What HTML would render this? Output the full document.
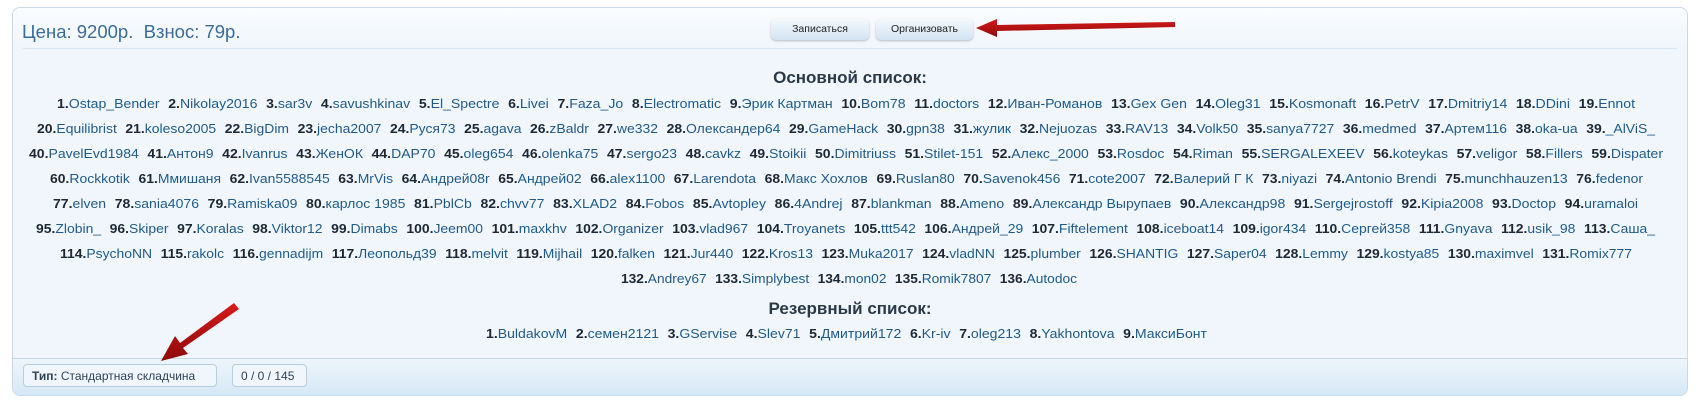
<!DOCTYPE html>
<html><head><meta charset="utf-8">
<style>
html,body{margin:0;padding:0;width:1705px;height:406px;background:#fff;overflow:hidden;font-family:"Liberation Sans","DejaVu Sans",sans-serif;}
#box{position:absolute;left:12px;top:7px;width:1674px;height:387px;border:1px solid #c9d9e8;border-radius:8px;background:#f0f6fc;overflow:hidden;}
#hdr{position:absolute;left:0;top:0;width:100%;height:40px;background:linear-gradient(#fafcfe,#f0f6fc);}
#sep{position:absolute;left:10px;right:10px;top:40px;height:1px;background:#d8e6f3;}
#price{position:absolute;left:9px;top:13px;font-size:18.5px;color:#3b6c9b;}
.btn{position:absolute;top:11px;height:21px;border-radius:5px;background:linear-gradient(#f4f9fd,#d3e4f2);box-shadow:0 1px 2px rgba(0,0,0,.25);font-size:10.5px;color:#222;text-align:center;line-height:21px;}
#foot{position:absolute;left:0;bottom:0;width:100%;height:36px;border-top:1px solid #c3d6e7;background:linear-gradient(#eef5fb,#d6e8f6);}
.tag{position:absolute;top:5px;height:23px;border:1px solid #b7cde0;border-radius:4px;background:#f0f6fc;font-size:12px;color:#2d4358;line-height:23px;box-sizing:border-box;padding:0 8px;}
.h{position:absolute;left:0;width:100%;text-align:center;font-weight:bold;font-size:17px;color:#2a3948;}
.ln{position:absolute;white-space:nowrap;font-size:13px;color:#1f5a8a;line-height:16px;}
.ln span{display:inline-block;transform-origin:0 0;}
.ln i{font-style:normal;font-weight:bold;color:#1c2834;}
.ln b{font-weight:normal;margin-right:8px;}
</style></head><body>
<div id="box">
 <div id="hdr"></div><div id="sep"></div>
 <div id="price">Цена: 9200р.&nbsp; Взнос: 79р.</div>
 <div class="btn" style="left:758px;width:98px;">Записаться</div>
 <div class="btn" style="left:863px;width:97px;">Организовать</div>
 <div class="h" style="top:60px;">Основной список:</div>
 <div class="h" style="top:291px;">Резервный список:</div>
 <div id="foot">
  <div class="tag" style="left:10px;width:194px;"><b>Тип:</b> Стандартная складчина</div>
  <div class="tag" style="left:219px;width:75px;">0 / 0 / 145</div>
 </div>
</div>

<div class="ln" id="l1"><span><i>1.</i><b>Ostap_Bender</b><i>2.</i><b>Nikolay2016</b><i>3.</i><b>sar3v</b><i>4.</i><b>savushkinav</b><i>5.</i><b>El_Spectre</b><i>6.</i><b>Livei</b><i>7.</i><b>Faza_Jo</b><i>8.</i><b>Electromatic</b><i>9.</i><b>Эрик Картман</b><i>10.</i><b>Bom78</b><i>11.</i><b>doctors</b><i>12.</i><b>Иван-Романов</b><i>13.</i><b>Gex Gen</b><i>14.</i><b>Oleg31</b><i>15.</i><b>Kosmonaft</b><i>16.</i><b>PetrV</b><i>17.</i><b>Dmitriy14</b><i>18.</i><b>DDini</b><i>19.</i><b>Ennot</b></span></div>
<div class="ln" id="l2"><span><i>20.</i><b>Equilibrist</b><i>21.</i><b>koleso2005</b><i>22.</i><b>BigDim</b><i>23.</i><b>jecha2007</b><i>24.</i><b>Руся73</b><i>25.</i><b>agava</b><i>26.</i><b>zBaldr</b><i>27.</i><b>we332</b><i>28.</i><b>Олександер64</b><i>29.</i><b>GameHack</b><i>30.</i><b>gpn38</b><i>31.</i><b>жулик</b><i>32.</i><b>Nejuozas</b><i>33.</i><b>RAV13</b><i>34.</i><b>Volk50</b><i>35.</i><b>sanya7727</b><i>36.</i><b>medmed</b><i>37.</i><b>Артем116</b><i>38.</i><b>oka-ua</b><i>39.</i><b>_AlViS_</b></span></div>
<div class="ln" id="l3"><span><i>40.</i><b>PavelEvd1984</b><i>41.</i><b>Антон9</b><i>42.</i><b>Ivanrus</b><i>43.</i><b>ЖенОК</b><i>44.</i><b>DAP70</b><i>45.</i><b>oleg654</b><i>46.</i><b>olenka75</b><i>47.</i><b>sergo23</b><i>48.</i><b>cavkz</b><i>49.</i><b>Stoikii</b><i>50.</i><b>Dimitriuss</b><i>51.</i><b>Stilet-151</b><i>52.</i><b>Алекс_2000</b><i>53.</i><b>Rosdoc</b><i>54.</i><b>Riman</b><i>55.</i><b>SERGALEXEEV</b><i>56.</i><b>koteykas</b><i>57.</i><b>veligor</b><i>58.</i><b>Fillers</b><i>59.</i><b>Dispater</b></span></div>
<div class="ln" id="l4"><span><i>60.</i><b>Rockkotik</b><i>61.</i><b>Ммишаня</b><i>62.</i><b>Ivan5588545</b><i>63.</i><b>MrVis</b><i>64.</i><b>Андрей08r</b><i>65.</i><b>Андрей02</b><i>66.</i><b>alex1100</b><i>67.</i><b>Larendota</b><i>68.</i><b>Макс Хохлов</b><i>69.</i><b>Ruslan80</b><i>70.</i><b>Savenok456</b><i>71.</i><b>cote2007</b><i>72.</i><b>Валерий Г К</b><i>73.</i><b>niyazi</b><i>74.</i><b>Antonio Brendi</b><i>75.</i><b>munchhauzen13</b><i>76.</i><b>fedenor</b></span></div>
<div class="ln" id="l5"><span><i>77.</i><b>elven</b><i>78.</i><b>sania4076</b><i>79.</i><b>Ramiska09</b><i>80.</i><b>карлос 1985</b><i>81.</i><b>PblCb</b><i>82.</i><b>chvv77</b><i>83.</i><b>XLAD2</b><i>84.</i><b>Fobos</b><i>85.</i><b>Avtopley</b><i>86.</i><b>4Andrej</b><i>87.</i><b>blankman</b><i>88.</i><b>Ameno</b><i>89.</i><b>Александр Вырупаев</b><i>90.</i><b>Александр98</b><i>91.</i><b>Sergejrostoff</b><i>92.</i><b>Kipia2008</b><i>93.</i><b>Doctop</b><i>94.</i><b>uramaloi</b></span></div>
<div class="ln" id="l6"><span><i>95.</i><b>Zlobin_</b><i>96.</i><b>Skiper</b><i>97.</i><b>Koralas</b><i>98.</i><b>Viktor12</b><i>99.</i><b>Dimabs</b><i>100.</i><b>Jeem00</b><i>101.</i><b>maxkhv</b><i>102.</i><b>Organizer</b><i>103.</i><b>vlad967</b><i>104.</i><b>Troyanets</b><i>105.</i><b>ttt542</b><i>106.</i><b>Андрей_29</b><i>107.</i><b>Fiftelement</b><i>108.</i><b>iceboat14</b><i>109.</i><b>igor434</b><i>110.</i><b>Сергей358</b><i>111.</i><b>Gnyava</b><i>112.</i><b>usik_98</b><i>113.</i><b>Саша_</b></span></div>
<div class="ln" id="l7"><span><i>114.</i><b>PsychoNN</b><i>115.</i><b>rakolc</b><i>116.</i><b>gennadijm</b><i>117.</i><b>Леопольд39</b><i>118.</i><b>melvit</b><i>119.</i><b>Mijhail</b><i>120.</i><b>falken</b><i>121.</i><b>Jur440</b><i>122.</i><b>Kros13</b><i>123.</i><b>Muka2017</b><i>124.</i><b>vladNN</b><i>125.</i><b>plumber</b><i>126.</i><b>SHANTIG</b><i>127.</i><b>Saper04</b><i>128.</i><b>Lemmy</b><i>129.</i><b>kostya85</b><i>130.</i><b>maximvel</b><i>131.</i><b>Romix777</b></span></div>
<div class="ln" id="l8"><span><i>132.</i><b>Andrey67</b><i>133.</i><b>Simplybest</b><i>134.</i><b>mon02</b><i>135.</i><b>Romik7807</b><i>136.</i><b>Autodoc</b></span></div>
<div class="ln" id="l9"><span><i>1.</i><b>BuldakovM</b><i>2.</i><b>семен2121</b><i>3.</i><b>GServise</b><i>4.</i><b>Slev71</b><i>5.</i><b>Дмитрий172</b><i>6.</i><b>Kr-iv</b><i>7.</i><b>oleg213</b><i>8.</i><b>Yakhontova</b><i>9.</i><b>МаксиБонт</b></span></div>

<svg width="1705" height="406" style="position:absolute;left:0;top:0;pointer-events:none">
 <defs><linearGradient id="ar" x1="0" y1="0" x2="0" y2="1"><stop offset="0" stop-color="#d81a1a"/><stop offset="1" stop-color="#8e0a0a"/></linearGradient></defs>
 <path d="M1175,22 L997,25 L997,19 L976,28 L997,37 L997,31 L1175,27 Z" fill="url(#ar)"/>
 <path d="M234,303 L180,343 L175,336 L161,361 L188,354 L183,348 L239,309 Z" fill="url(#ar)"/>
</svg>

<script>
var T=[["l1",57,1635,96],["l2",37,1655,121],["l3",29,1663,146],["l4",50,1643,171],["l5",53,1638,196],["l6",36,1655,221],["l7",60,1632,246],["l8",621,1077,271],["l9",486,1207,326]];
T.forEach(function(t){var d=document.getElementById(t[0]);d.style.left=t[1]+"px";d.style.top=t[3]+"px";
var s=d.firstChild;var bs=s.getElementsByTagName("b");bs[bs.length-1].style.marginRight="0";
var w=s.getBoundingClientRect().width;s.style.transform="scaleX("+((t[2]-t[1])/w)+")";});
</script>
</body></html>
